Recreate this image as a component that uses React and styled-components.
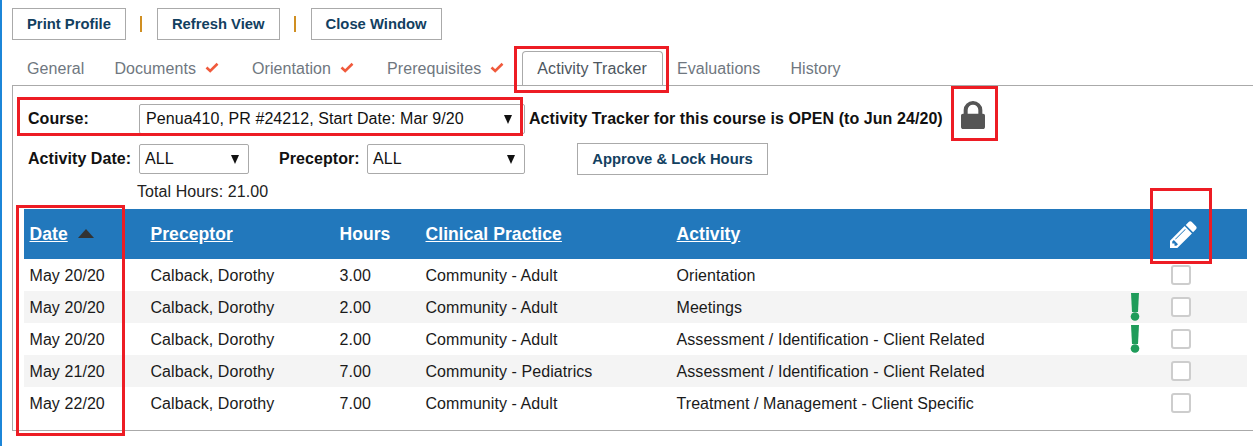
import React from "react";
import styled, { createGlobalStyle } from "styled-components";

const Global = createGlobalStyle`
  html, body { margin: 0; padding: 0; background: #fff; }
  body { font-family: "Liberation Sans", Arial, sans-serif; font-size: 16px; letter-spacing: 0.07px; color: #1a1a1a; overflow: hidden; }
`;

const Page = styled.div`
  position: relative;
  width: 1253px;
  height: 446px;
  box-sizing: border-box;
  border-left: 2px solid #1c86d8;
  padding: 8px 0 0 10px;
  overflow: hidden;
`;
const Toolbar = styled.div`
  display: flex;
  align-items: center;
`;
const Button = styled.button`
  height: 32px;
  box-sizing: border-box;
  padding: 0 14px;
  background: #fff;
  border: 1px solid #aaa;
  font: bold 14.8px "Liberation Sans", Arial, sans-serif;
  color: #12405f;
  white-space: nowrap;
`;
const ApproveButton = styled(Button)`
  margin-left: 52px;
  width: 191px;
  padding: 0;
`;
const Sep = styled.span`
  width: 2px;
  height: 16px;
  background: #d08f22;
  margin: 0 15px 0 14px;
`;
const TabBar = styled.div`
  display: flex;
  height: 34px;
  margin-top: 11px;
`;
const Tab = styled.div`
  box-sizing: border-box;
  display: flex;
  align-items: center;
  padding: 0 ${(p) => (p.$check ? "18px" : "15px")} 0 14px;
  color: ${(p) => (p.$active ? "#4d5660" : "#6f7780")};
  white-space: nowrap;
  border: 1px solid ${(p) => (p.$active ? "#aaa" : "transparent")};
  border-bottom: none;
  border-radius: 4px 4px 0 0;
  margin-left: ${(p) => (p.$first ? "0" : "-1px")};
`;
const Check = styled.svg`
  width: 14px;
  height: 11px;
  margin: -3px 0 0 9px;
`;
const Panel = styled.div`
  height: 346px;
  box-sizing: border-box;
  border: 1px solid #aaa;
  border-right: none;
  padding: 18px 6px 0 11px;
`;
const FormRow = styled.div`
  display: flex;
  align-items: center;
  height: ${(p) => p.$h}px;
  margin-top: ${(p) => p.$mt || 0}px;
  padding-left: 4px;
`;
const Label = styled.label`
  font-weight: bold;
  color: #111;
  width: ${(p) => p.$w}px;
  margin-left: ${(p) => p.$ml || 0}px;
  flex: none;
  white-space: nowrap;
`;
const Select = styled.div`
  box-sizing: border-box;
  width: ${(p) => p.$w}px;
  height: ${(p) => p.$h}px;
  flex: none;
  display: flex;
  align-items: center;
  justify-content: space-between;
  padding: 0 ${(p) => p.$pr}px 0 ${(p) => p.$pl}px;
  background: #fff;
  border: 1px solid #aaa;
  border-radius: 2px;
  color: #111;
  white-space: nowrap;
`;
const Arrow = styled.span`
  width: 0;
  height: 0;
  border-left: 4.5px solid transparent;
  border-right: 4.5px solid transparent;
  border-top: 9px solid #111;
`;
const Status = styled.span`
  font-weight: bold;
  color: #111;
  margin-left: 4px;
  white-space: nowrap;
`;
const LockIcon = styled.svg`
  width: 24px;
  height: 28px;
  margin-left: 18px;
  margin-top: -9px;
  fill: #555;
`;
const Total = styled.div`
  margin: 8px 0 8px 113px;
  line-height: 18px;
  color: #222;
`;
const Table = styled.table`
  width: 1223px;
  border-collapse: collapse;
  table-layout: fixed;
`;
const HeadRow = styled.tr`
  height: 50px;
  background: #2278bc;
`;
const Th = styled.th`
  padding: 0 0 0 5.5px;
  text-align: left;
  font-size: 17.5px;
  font-weight: bold;
  color: #fff;
`;
const HeadLink = styled.span`
  text-decoration: underline;
`;
const SortUp = styled.span`
  display: inline-block;
  width: 0;
  height: 0;
  margin-left: 10px;
  vertical-align: 2px;
  border-left: 8px solid transparent;
  border-right: 8px solid transparent;
  border-bottom: 9px solid #333;
`;
const PencilCell = styled.th`
  padding: 0;
  text-align: center;
`;
const PencilIcon = styled.svg`
  display: block;
  width: 27px;
  height: 27px;
  margin: 0 0 0 13px;
  fill: #fff;
`;
const Row = styled.tr`
  height: 32px;
  background: ${(p) => (p.$shade ? "#f4f4f4" : "#fff")};
`;
const Td = styled.td`
  padding: 2px 0 0 5.5px;
  color: #1a1a1a;
  white-space: nowrap;
`;
const IconTd = styled.td`
  padding: 0;
`;
const Flag = styled.svg`
  display: block;
  width: 10px;
  height: 28px;
  margin: 0 0 0 17px;
  fill: #1f9c5a;
`;
const Box = styled.span`
  display: block;
  box-sizing: border-box;
  width: 20px;
  height: 20px;
  margin-left: 14px;
  background: #fff;
  border: 2px solid #cdcdcd;
  border-radius: 3px;
`;
const Callout = styled.div`
  position: absolute;
  box-sizing: border-box;
  left: ${(p) => p.$x}px;
  top: ${(p) => p.$y}px;
  width: ${(p) => p.$w}px;
  height: ${(p) => p.$h}px;
  border: 3px solid #ed1c24;
  pointer-events: none;
`;

const RedCheck = () => (
  <Check viewBox="0 0 14 11">
    <path d="M1.5 5.5 L5.2 9 L12.5 1.8" fill="none" stroke="#f05a3c" strokeWidth="2.6" />
  </Check>
);

const rows = [
  ["May 20/20", "3.00", "Community - Adult", "Orientation", false],
  ["May 20/20", "2.00", "Community - Adult", "Meetings", true],
  ["May 20/20", "2.00", "Community - Adult", "Assessment / Identification - Client Related", true],
  ["May 21/20", "7.00", "Community - Pediatrics", "Assessment / Identification - Client Related", false],
  ["May 22/20", "7.00", "Community - Adult", "Treatment / Management - Client Specific", false],
];

export default function App() {
  return (
    <>
      <Global />
      <Page>
        <Toolbar>
          <Button>Print Profile</Button>
          <Sep />
          <Button>Refresh View</Button>
          <Sep />
          <Button>Close Window</Button>
        </Toolbar>
        <TabBar>
          <Tab $first>General</Tab>
          <Tab $check>Documents<RedCheck /></Tab>
          <Tab $check>Orientation<RedCheck /></Tab>
          <Tab $check>Prerequisites<RedCheck /></Tab>
          <Tab $active>Activity Tracker</Tab>
          <Tab>Evaluations</Tab>
          <Tab>History</Tab>
        </TabBar>
        <Panel>
          <FormRow $h={30}>
            <Label $w={111}>Course:</Label>
            <Select $w={386} $h={30} $pl={6} $pr={12}>Penua410, PR #24212, Start Date: Mar 9/20<Arrow /></Select>
            <Status>Activity Tracker for this course is OPEN (to Jun 24/20)</Status>
            <LockIcon viewBox="320 128 1152 1408" preserveAspectRatio="none">
              <path d="M640 768h512v-192q0-106-75-181t-181-75-181 75-75 181v192zm832 96v576q0 40-28 68t-68 28h-960q-40 0-68-28t-28-68v-576q0-40 28-68t68-28h32v-192q0-184 132-316t316-132 316 132 132 316v192h32q40 0 68 28t28 68z" />
            </LockIcon>
          </FormRow>
          <FormRow $h={32} $mt={9}>
            <Label $w={111}>Activity Date:</Label>
            <Select $w={110} $h={30} $pl={5} $pr={9}>ALL<Arrow /></Select>
            <Label $w={88} $ml={30}>Preceptor:</Label>
            <Select $w={158} $h={30} $pl={5} $pr={9}>ALL<Arrow /></Select>
            <ApproveButton>Approve &amp; Lock Hours</ApproveButton>
          </FormRow>
          <Total>Total Hours: 21.00</Total>
          <Table>
            <colgroup>
              <col width="121" />
              <col width="189" />
              <col width="86" />
              <col width="251" />
              <col width="442" />
              <col width="44" />
              <col width="90" />
            </colgroup>
            <thead>
              <HeadRow>
                <Th><HeadLink>Date</HeadLink><SortUp /></Th>
                <Th><HeadLink>Preceptor</HeadLink></Th>
                <Th>Hours</Th>
                <Th><HeadLink>Clinical Practice</HeadLink></Th>
                <Th><HeadLink>Activity</HeadLink></Th>
                <Th />
                <PencilCell>
                  <PencilIcon viewBox="128 128 1536 1536">
                    <path d="M491 1536l91-91-235-235-91 91v107h128v128h107zm523-928q0-22-22-22-10 0-17 7l-542 542q-7 7-7 17 0 22 22 22 10 0 17-7l542-542q7-7 7-17zm-54-192l416 416-832 832h-416v-416zm683 96q0 53-37 90l-166 166-416-416 166-165q36-38 90-38 53 0 91 38l235 234q37 39 37 91z" />
                  </PencilIcon>
                </PencilCell>
              </HeadRow>
            </thead>
            <tbody>
              {rows.map((r, i) => (
                <Row key={i} $shade={i % 2 === 1}>
                  <Td>{r[0]}</Td>
                  <Td>Calback, Dorothy</Td>
                  <Td>{r[1]}</Td>
                  <Td>{r[2]}</Td>
                  <Td>{r[3]}</Td>
                  <IconTd>
                    {r[4] && (
                      <Flag viewBox="0 0 10 28">
                        <path d="M1 0 H9 L8 19 H2 Z" />
                        <circle cx="5" cy="23.5" r="4.3" />
                      </Flag>
                    )}
                  </IconTd>
                  <IconTd><Box /></IconTd>
                </Row>
              ))}
            </tbody>
          </Table>
        </Panel>
        <Callout $x={512} $y={46} $w={155} $h={47} />
        <Callout $x={15} $y={97} $w={506} $h={39} />
        <Callout $x={949} $y={86} $w={47} $h={55} />
        <Callout $x={14} $y={205} $w={109} $h={231} />
        <Callout $x={1148} $y={188} $w={62} $h={76} />
      </Page>
    </>
  );
}
